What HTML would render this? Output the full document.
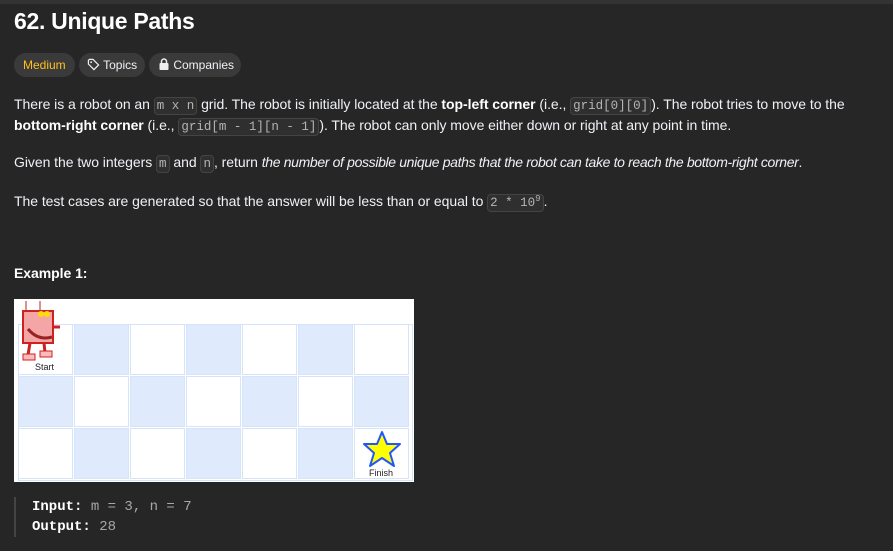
<!DOCTYPE html>
<html><head><meta charset="utf-8"><style>
body{margin:0;width:893px;height:551px;background:#262626;color:#eff1f6;font-family:"Liberation Sans",sans-serif;font-size:14px;overflow:hidden;position:relative}
.top{position:absolute;left:0;top:0;width:893px;height:4px;background:#333}
h1{position:absolute;left:14px;top:8px;margin:0;font-size:23px;font-weight:bold;color:#fff;letter-spacing:-0.3px}
.pill{position:absolute;top:53px;height:24px;border-radius:12px;background:#3a3a3a;font-size:12px;line-height:24px;color:#eff1f6;padding:0 9px;box-sizing:border-box;white-space:nowrap}
p{position:absolute;left:14px;margin:0;line-height:21px;white-space:nowrap;letter-spacing:-0.05px}
i{letter-spacing:-0.35px}
code{font-family:"Liberation Mono",monospace;font-size:12.5px;color:#b5b5b5;background:#2f2f2f;border:1px solid #444;border-radius:4px;padding:1px 2px;letter-spacing:0}
b{font-weight:bold;color:#fff}
.grid{position:absolute;left:14px;top:299px;width:400px;height:183px;background:#fff}
.c{position:absolute;width:55px;height:51px;box-sizing:border-box;border:1px solid #d6e4fa}
.pre{position:absolute;left:14px;top:497px;border-left:2px solid #444;padding-left:16px;font-family:"Liberation Mono",monospace;font-size:14px;line-height:20px;color:#a8a8a8}
.pre b{color:#fff}
</style></head><body>
<div class="top"></div>
<h1>62. Unique Paths</h1>
<div class="pill" style="left:14px;width:61px;color:#ffc01e">Medium</div>
<div class="pill" style="left:79px;width:66px;padding-left:8px"><svg width="13" height="13" viewBox="0 0 14 14" style="vertical-align:-2px"><path d="M1.5 2.5v4l6 6 5-5-6-6h-4z" fill="none" stroke="#eee" stroke-width="1.3"/><circle cx="4.5" cy="4.5" r="1" fill="#eee"/></svg> Topics</div>
<div class="pill" style="left:149px;width:92px;padding-left:9px"><svg width="12" height="12" viewBox="0 0 12 12" style="vertical-align:-1px"><rect x="1.5" y="5" width="9" height="7" rx="1" fill="#eee"/><path d="M3.5 5V3.5a2.5 2.5 0 0 1 5 0V5" fill="none" stroke="#eee" stroke-width="1.5"/></svg> Companies</div>
<p style="top:94px">There is a robot on an <code>m x n</code> grid. The robot is initially located at the <b>top-left corner</b> (i.e., <code>grid[0][0]</code>). The robot tries to move to the</p>
<p style="top:115px"><b>bottom-right corner</b> (i.e., <code>grid[m - 1][n - 1]</code>). The robot can only move either down or right at any point in time.</p>
<p style="top:152px">Given the two integers <code>m</code> and <code>n</code>, return <i>the number of possible unique paths that the robot can take to reach the bottom-right corner</i>.</p>
<p style="top:189px">The test cases are generated so that the answer will be less than or equal to <code>2 * 10<sup style="font-size:9px">9</sup></code>.</p>
<p style="top:263px"><b>Example 1:</b></p>
<div class="grid">
<div style="position:absolute;left:4px;top:25px;width:393px;height:155px;border:1px solid #d6e4fa"></div>
</div>
<div id="cells"></div>
<script>
var h='';for(var r=0;r<3;r++)for(var c=0;c<7;c++){var x=18+c*56,y=324+r*52;var blue=(r+c)%2==1;h+='<div class="c" style="left:'+x+'px;top:'+y+'px;background:'+(blue?'#dfeafc':'#fff')+'"></div>';}
document.getElementById('cells').innerHTML=h;
</script>
<svg style="position:absolute;left:18px;top:299px" width="60" height="75" viewBox="0 0 60 75">
<line x1="8" y1="2" x2="8" y2="12" stroke="#b22" /><line x1="22" y1="2" x2="22" y2="12" stroke="#b22"/>
<rect x="5" y="12" width="30" height="32" fill="#f4a6a6" stroke="#c22" stroke-width="2"/>
<circle cx="23" cy="15" r="3" fill="#fd0"/><circle cx="29" cy="15" r="3" fill="#fd0"/>
<path d="M10 30 Q20 42 34 38" stroke="#922" stroke-width="3" fill="none"/>
<line x1="34" y1="28" x2="42" y2="28" stroke="#c22" stroke-width="3"/>
<path d="M12 44 l-2 12 M26 44 l1 10" stroke="#c22" stroke-width="3"/>
<rect x="5" y="55" width="12" height="6" fill="#fbb" stroke="#c22"/><rect x="22" y="52" width="12" height="6" fill="#fbb" stroke="#c22"/>
<text x="17" y="71" font-size="9" fill="#222" font-family="Liberation Sans">Start</text>
</svg>
<svg style="position:absolute;left:362px;top:430px" width="44" height="50" viewBox="0 0 44 50">
<path d="M20 2 L25 14 L38 14 L28 23 L32 36 L20 28 L8 36 L12 23 L2 14 L15 14 Z" fill="#ff0" stroke="#25f" stroke-width="2" stroke-linejoin="round"/>
<text x="7" y="46" font-size="9" fill="#222" font-family="Liberation Sans">Finish</text>
</svg>
<div class="pre"><b>Input:</b> m = 3, n = 7<br><b>Output:</b> 28</div>
</body></html>
